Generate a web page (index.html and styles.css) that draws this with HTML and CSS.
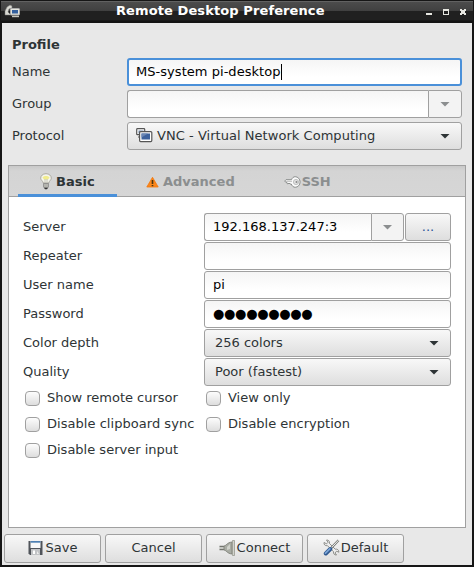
FILE: index.html
```html
<!DOCTYPE html>
<html lang="en">
<head>
<meta charset="utf-8">
<title>Remote Desktop Preference</title>
<link rel="stylesheet" href="styles.css">
</head>
<body>
<div class="window">
  <header class="titlebar">
    <svg class="app-icon" width="17" height="14" viewBox="0 0 17 14">
      <path d="M1 11V7l2-4 3-2 2 1v2L5 5 4 8l3 3H2z" fill="#d9d9d2" stroke="#777" stroke-width=".5"/>
      <rect x="6.500" y="4.500" width="9" height="6.500" rx=".7" fill="#e3e4dc" stroke="#aaa"/>
      <rect x="8" y="6" width="6" height="3.500" fill="#35619f"/>
      <path d="M8 12.500h7" stroke="#c8c8c0" stroke-width="1.400"/>
    </svg>
    <h1 class="title">Remote Desktop Preference</h1>
    <svg class="controls" width="42" height="8" viewBox="0 0 42 8">
      <path d="M1 5h6v2H1z" fill="#e6e6e0"/>
      <path d="M18 1h6v6h-6zM19 3v3h4V3z" fill="#e6e6e0" fill-rule="evenodd"/>
      <path d="M35 1h2v1h2V1h2v2h-1v2h1v2h-2V6h-2v1h-2V5h1V3h-1z" fill="#e6e6e0"/>
    </svg>
  </header>
  <main class="body">
    <section class="profile">
      <h2 class="heading">Profile</h2>
      <label class="label">Name</label>
      <div class="entry focused"><span class="wide">MS-system pi-desktop</span><i class="caret"></i></div>
      <label class="label">Group</label>
      <div class="combo-entry"><div class="entry"></div><div class="drop"><i class="arrow dim"></i></div></div>
      <label class="label">Protocol</label>
      <div class="select">
        <svg class="vnc-icon" width="17" height="15" viewBox="0 0 17 15">
          <rect x=".7" y=".7" width="8" height="6" rx=".8" fill="#fff" stroke="#555" stroke-width="1.200"/>
          <path d="M2.500 2.500h5v3h-5z" fill="#6f88ad"/>
          <path d="M2 9h2" stroke="#555"/>
          <rect x="3.600" y="3.600" width="12.200" height="10" rx="1" fill="#fff" stroke="#555" stroke-width="1.200"/>
          <rect x="5.500" y="5.500" width="8.500" height="6" fill="#3d629d"/>
          <path d="M5.500 5.500H12l-6.500 4z" fill="#6b87b5"/>
        </svg>
        <span class="wide">VNC - Virtual Network Computing</span><i class="arrow"></i>
      </div>
    </section>
    <section class="notebook">
      <nav class="tabs">
        <div class="tab active">
          <svg width="12" height="17" viewBox="0 0 12 17">
            <path d="M6 .7C2.700.7.700 2.800.700 5.200c0 1.800 2 2.500 2.600 4.800h5.400c.6-2.300 2.600-3 2.600-4.800C11.300 2.800 9.300.7 6 .7z" fill="#f5f5ec" stroke="#a5a39a" stroke-width=".9"/>
            <path d="M2.500 4.500c1-2 6-2 7 0L8 6.500H4z" fill="#f1ec8c"/>
            <path d="M5 6v5M7 6v5" stroke="#b2b2a8" stroke-width=".7"/>
            <path d="M3.500 10.500h5V14l-1 1h-3l-1-1z" fill="#b4b4ae" stroke="#777" stroke-width=".6"/>
            <path d="M4 14.800h4l-1 1.500H5z" fill="#333"/>
          </svg><span>Basic</span>
        </div>
        <div class="tab advanced">
          <svg width="13" height="12" viewBox="0 0 13 12">
            <path d="M6.500 1.300 12.200 11H.8z" fill="#fa861b" stroke="#f4760a" stroke-width=".8" stroke-linejoin="round"/>
            <path d="M5.700 4h1.600v4H5.700zM5.700 9h1.600v1.300H5.700z" fill="#4a3512"/>
          </svg><span>Advanced</span>
        </div>
        <div class="tab ssh">
          <svg width="17" height="12" viewBox="0 0 17 12">
            <path d="M.7 5 2 3.700h5.500C8.300 1.700 9.700.7 11.200.7c2.700 0 4.900 2.400 4.900 5.300s-2.200 5.300-4.900 5.300c-1.800 0-3.200-1.400-4-3.300H6L5 7 4 8 2.500 7 3 6H1.500z" fill="#fafafa" stroke="#8b8e8d"/>
            <circle cx="12" cy="6" r="2.600" fill="#e2e2e2" stroke="#b4b6b5" stroke-width=".8"/>
            <circle cx="12.500" cy="6" r="1" fill="#888"/>
            <path d="M3 5.300h5" stroke="#aaa" stroke-width=".8"/>
          </svg><span>SSH</span>
        </div>
      </nav>
      <div class="page">
        <label class="label">Server</label>
        <div class="server-row">
          <div class="combo-entry"><div class="entry">192.168.137.247:3</div><div class="drop"><i class="arrow dim"></i></div></div>
          <button class="button more">...</button>
        </div>
        <label class="label">Repeater</label><div class="entry"></div>
        <label class="label">User name</label><div class="entry">pi</div>
        <label class="label">Password</label><div class="entry password">●●●●●●●●●</div>
        <label class="label">Color depth</label><div class="select plain"><span>256 colors</span><i class="arrow"></i></div>
        <label class="label">Quality</label><div class="select plain"><span>Poor (fastest)</span><i class="arrow"></i></div>
      </div>
      <div class="checks">
        <label class="check"><i class="box"></i>Show remote cursor</label>
        <label class="check"><i class="box"></i>View only</label>
        <label class="check"><i class="box"></i><span class="wide">Disable clipboard sync</span></label>
        <label class="check"><i class="box"></i>Disable encryption</label>
        <label class="check"><i class="box"></i>Disable server input</label>
      </div>
    </section>
    <footer class="actions">
      <button class="button">
        <svg width="15" height="14" viewBox="0 0 15 14">
          <path d="M.5 0h14v14H2L.5 12.500z" fill="#50545a"/>
          <path d="M2.500 0h10v7h-10z" fill="#f7f8f8"/><path d="M2.500 0h10v1.700h-10z" fill="#4d80b3"/>
          <path d="M3 8h9v6H3z" fill="#c2c4c6"/><path d="M5 9.500h2V13H5z" fill="#fff"/><path d="M9 10l2 3H9z" fill="#eee"/>
        </svg><span>Save</span>
      </button>
      <button class="button"><span>Cancel</span></button>
      <button class="button tight">
        <svg width="17" height="16" viewBox="0 0 17 16">
          <path d="M.5 6.500h6M.5 9.500h6" stroke="#73756f" stroke-width="1.300"/><path d="M.5 8h6" stroke="#c2c4be" stroke-width="1.500"/>
          <path d="M5 6c2 0 3-3.500 8-4v12c-5-.5-6-4-8-4z" fill="#a9aca4" stroke="#7f8178" stroke-width=".9"/>
          <path d="M8 7l3-3v5l-3 1z" fill="#d0d2cb"/>
          <path d="M13.500.5h2v15h-2z" fill="#d2d4cd" stroke="#8f9187" stroke-width=".7"/>
        </svg><span>Connect</span>
      </button>
      <button class="button tight">
        <svg width="17" height="17" viewBox="0 0 17 17">
          <path d="M3.500 1 5 3.300 3.600 4.800 1 3.500C.7 5.500 2 7 4.500 6.700l6 6c-.3 2 1 3.500 3 3.300l-1.500-2 1.500-1.800 2.400 1c0-2.200-1.500-3.500-3.700-3L6.500 4.500C6.700 2 5.500.8 3.500 1z" fill="#eee" stroke="#777974" stroke-width=".8"/>
          <path d="m15.500 1.200-7 7.500" stroke="#777974" stroke-width="2.400"/><path d="m15.500 1.200-7 7.500" stroke="#eee"/>
          <path d="m7.300 10-4.500 4.500" stroke="#2f588f" stroke-width="4" stroke-linecap="round"/><path d="m6.800 9.800-4.300 4.300" stroke="#7ba5d7" stroke-width="1.800" stroke-linecap="round"/>
        </svg><span>Default</span>
      </button>
    </footer>
  </main>
</div>
</body>
</html>
```
FILE: styles.css
```css
* { box-sizing: border-box; }
body { margin: 0; font: 13px/16px "DejaVu Sans", sans-serif; color: #2e3436; background: #161616; }
.window { width: 474px; height: 567px; padding: 0 2px 2px; display: flex; flex-direction: column; background: #161616; }
.titlebar { height: 23px; margin: 0 -1px; border-top: 1px solid #161616; padding: 0 5px 2px 3px; display: flex; align-items: center;
  background: linear-gradient(#777 0, #4c4c4c 1px, #404040 10px, #202020 10px, #202020 19px, #141414 20px); }
.app-icon { margin-right: 95px; }
.title { flex: 1; margin: 0; font-size: 13px; line-height: 16px; letter-spacing: .1px; white-space: nowrap; color: #fff; }
.controls { margin: 1px 1px 0 0; }
.body { flex: 1; display: flex; flex-direction: column; background: #e8e8e8; }
.profile { display: grid; grid-template: 28px repeat(3, 28px) / 115px 335px; row-gap: 4px; padding: 3px 0 0 10px; align-items: center; }
.heading { grid-column: 1 / 3; margin: 10px 0 0; font-size: 13px; line-height: 16px; }
.entry { display: flex; align-items: center; min-width: 0; height: 28px; padding: 0 8px; border: 1px solid #a0a0a0; border-radius: 3px;
  background: linear-gradient(#f5f5f5, #fff 70%); color: #000; white-space: nowrap; }
.focused { border: 2px solid #4a90d9; padding-left: 7px; }
.wide { letter-spacing: .04px; }
.password { letter-spacing: -.3px; }
.caret { width: 1px; height: 16px; background: #000; }
.combo-entry { display: flex; min-width: 0; flex: 1; }
.combo-entry .entry { flex: 1; border-right: 0; border-radius: 3px 0 0 3px; }
.drop { width: 34px; height: 28px; display: flex; align-items: center; justify-content: center; border: 1px solid #a0a0a0; border-radius: 0 3px 3px 0; background: #f3f3f3; }
.select, .button { border: 1px solid #a0a0a0; border-radius: 3px; background: linear-gradient(#f8f8f8, #dedede); }
.select { height: 28px; padding: 0 11px 0 8px; display: flex; align-items: center; }
.select.plain { padding-left: 10px; }
.select .arrow { margin-left: auto; }
.vnc-icon { margin: -2px 4px 0 0; }
.arrow { width: 10px; height: 5px; background: #2e3436; clip-path: polygon(0 0, 100% 0, 50% 100%); }
.dim { background: #8b8e8f; }
.notebook { width: 458px; height: 363px; margin: 15px 0 0 6px; border: 1px solid #a0a0a0; background: #fff; }
.tabs { height: 31px; padding-left: 9px; display: flex; border-bottom: 1px solid #a0a0a0; background: linear-gradient(#c9c9c9, #d4d4d4 5px, #d6d6d6); }
.tab { height: 31px; display: flex; align-items: center; gap: 4px; font-weight: bold; color: #8b8e8f; }
.tab.active { width: 99px; padding: 3px 0 0 22px; color: #2e3436; border-bottom: 3px solid #4a90d9; }
.tab.advanced { padding-left: 29px; }
.tab.ssh { padding-left: 49px; gap: 1px; }
.page { display: grid; grid-template-columns: 181px 247px; grid-auto-rows: 28px; row-gap: 1px; padding: 16px 0 0 14px; align-items: center; }
.server-row { display: flex; gap: 1px; }
.server-row .drop { width: 33px; }
.button { height: 29px; padding: 0; display: flex; align-items: center; justify-content: center; gap: 3px; font: inherit; color: inherit; }
.tight { gap: 1px; }
.more { width: 46px; height: 28px; color: #2a5599; }
.checks { display: grid; grid-template-columns: 181px 180px; grid-auto-rows: 26px; padding: 0 0 0 16px; }
.check { display: flex; align-items: center; gap: 7px; height: 24px; white-space: nowrap; }
.box { width: 15px; height: 15px; border: 1px solid #a0a0a0; border-radius: 4px; background: linear-gradient(#fdfdfd, #ddd); }
.actions { display: flex; gap: 4px; padding: 6px 0 0 2px; }
.actions .button { width: 97px; padding-bottom: 2px; }
```
